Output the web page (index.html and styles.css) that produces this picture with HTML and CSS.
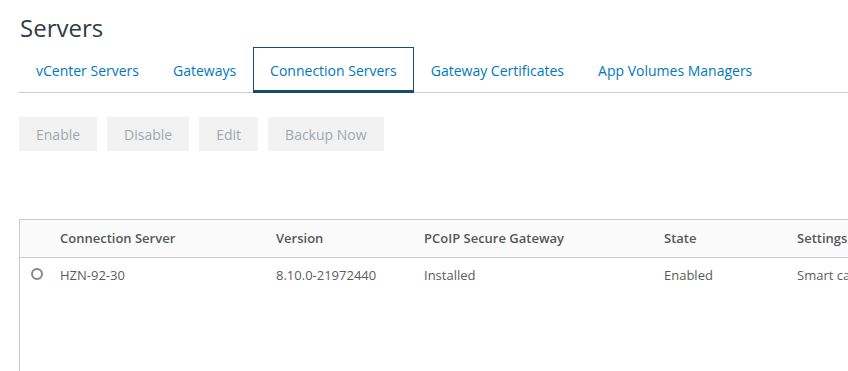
FILE: index.html
```html
<!DOCTYPE html>
<html lang="en">
<head>
    <meta charset="UTF-8">
    <meta name="viewport" content="width=device-width, initial-scale=1.0">
    <title>Servers</title>
    <link rel="stylesheet" href="styles.css">
</head>
<body>

<div class="page">
    <h1>Servers</h1>

    <!-- tabs -->
    <ul class="tabs">
        <li class="tab">vCenter Servers</li>
        <li class="tab">Gateways</li>
        <li class="tab active">Connection Servers</li>
        <li class="tab">Gateway Certificates</li>
        <li class="tab">App Volumes Managers</li>
    </ul>

    <!-- toolbar -->
    <div class="toolbar">
        <button class="btn" disabled>Enable</button>
        <button class="btn" disabled>Disable</button>
        <button class="btn" disabled>Edit</button>
        <button class="btn" disabled>Backup Now</button>
    </div>

    <!-- grid -->
    <div class="datagrid">
        <table>
            <colgroup>
                <col class="col-select">
                <col class="col-name">
                <col class="col-version">
                <col class="col-pcoip">
                <col class="col-state">
                <col class="col-settings">
            </colgroup>
            <thead>
                <tr>
                    <th></th>
                    <th>Connection Server</th>
                    <th>Version</th>
                    <th>PCoIP Secure Gateway</th>
                    <th>State</th>
                    <th>Settings</th>
                </tr>
            </thead>
            <tbody>
                <tr>
                    <td><span class="radio"></span></td>
                    <td>HZN-92-30</td>
                    <td>8.10.0-21972440</td>
                    <td>Installed</td>
                    <td>Enabled</td>
                    <td>Smart card authentication</td>
                </tr>
            </tbody>
        </table>
    </div>
</div>

</body>
</html>
```

FILE: styles.css
```css
body {
    font-family: 'Open Sans', 'Liberation Sans', sans-serif;
    margin: 0;
    padding: 0;
    background: #fff;
    color: #565656;
    overflow: hidden;
}

.page {
    padding: 0 0 0 19px;
    width: 1000px;
}

h1 {
    font-size: 24px;
    font-weight: 400;
    line-height: 32px;
    color: #313b46;
    margin: 12px 0 0 1px;
}

.tabs {
    list-style: none;
    margin: 3px 0 0 0;
    padding: 0;
    display: flex;
    height: 45px;
    border-bottom: 1px solid #cccccc;
}

.tab {
    font-size: 14px;
    line-height: 20px;
    color: #0079b8;
    padding: 13px 16px 9px;
    border: 1px solid transparent;
    border-bottom: 3px solid transparent;
    height: 20px;
}

.tab.active {
    border-color: #134e6f;
    background: #fff;
}

.toolbar {
    display: flex;
    gap: 10px;
    margin-top: 24px;
}

.btn {
    font-family: inherit;
    font-size: 14px;
    line-height: 20px;
    height: 34px;
    padding: 1px 17px 0;
    border: none;
    border-radius: 0;
    background: #f2f2f2;
    color: #a3a8ad;
}

.datagrid {
    margin-top: 68px;
    border: 1px solid #cccccc;
    height: 400px;
}

table {
    border-collapse: collapse;
    table-layout: fixed;
    width: 100%;
}

.col-select { width: 28px; }
.col-name { width: 216px; }
.col-version { width: 148px; }
.col-pcoip { width: 240px; }
.col-state { width: 133px; }

th, td {
    font-size: 13px;
    line-height: 20px;
    text-align: left;
    padding: 8px 12px 9px;
    white-space: nowrap;
    overflow: hidden;
}

th {
    font-weight: 600;
    color: #575757;
    background: #fafafa;
    border-bottom: 1px solid #cccccc;
}

td {
    color: #5c5c5c;
    padding-top: 7px;
}

td:first-child {
    padding: 7px 0 0 11px;
    vertical-align: top;
}

.radio {
    display: block;
    width: 8px;
    height: 8px;
    margin-top: 3px;
    border: 2px solid #86868c;
    border-radius: 50%;
}
```
